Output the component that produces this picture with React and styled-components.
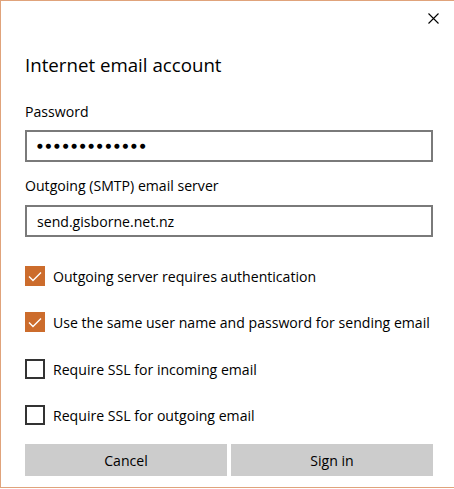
import styled, { createGlobalStyle } from "styled-components"

const Global = createGlobalStyle`
  html, body { margin: 0; padding: 0; background: #fff; }
  body { font-family: "Open Sans", "Noto Sans", sans-serif; color: #000; }
`

const Window = styled.div`
  width: 454px;
  height: 488px;
  box-sizing: border-box;
  border-top: 1px solid #e0a37b;
  border-left: 1px solid #e0a37b;
  border-bottom: 1px solid #e0a37b;
  display: flex;
  flex-direction: column;
  padding: 0 21px 0 24px;
  position: relative;
`

const CloseButton = styled.button`
  position: absolute;
  top: 8px;
  right: 11px;
  width: 20px;
  height: 18px;
  border: 0;
  background: none;
  padding: 0;
  display: flex;
  align-items: center;
  justify-content: center;
`

const Title = styled.h1`
  margin: 50px 0 0;
  font-size: 18.7px;
  font-weight: 400;
  line-height: 28px;
`

const Label = styled.div`
  margin-top: ${p => p.$top}px;
  font-size: 14.1px;
  line-height: 20px;
  white-space: nowrap;
`

const Input = styled.div`
  margin-top: ${p => p.$top}px;
  height: 32px;
  box-sizing: border-box;
  border: 2px solid #7a7a7a;
  padding: 0 10px;
  display: flex;
  align-items: center;
  font-size: 14.1px;
`

const Dots = styled.span`
  font-size: 6.6px;
  letter-spacing: 2.8px;
  font-family: "DejaVu Sans", sans-serif;
`

const CheckRow = styled.label`
  margin-top: ${p => p.$top}px;
  display: flex;
  align-items: center;
  gap: 8px;
  height: 20px;
  font-size: 14.1px;
  white-space: nowrap;
`

const Box = styled.span`
  width: 20px;
  height: 20px;
  box-sizing: border-box;
  flex-shrink: 0;
  display: flex;
  align-items: center;
  justify-content: center;
  background: ${p => (p.$checked ? "#cc6c2c" : "#fff")};
  border: ${p => (p.$checked ? "none" : "2px solid #333")};
`

const Buttons = styled.div`
  margin-top: 19px;
  display: grid;
  grid-template-columns: 1fr 1fr;
  gap: 4px;
`

const Button = styled.button`
  height: 32px;
  border: 0;
  background: #cccccc;
  font-family: inherit;
  font-size: 14.1px;
  color: #000;
`

function Check({ checked, children, top }) {
  return (
    <CheckRow $top={top}>
      <Box $checked={checked}>
        {checked && (
          <svg width="14" height="11" viewBox="0 0 14 11">
            <path d="M1 5.5 L5 9.5 L13 1.5" fill="none" stroke="#fff" strokeWidth="1.4" />
          </svg>
        )}
      </Box>
      {children}
    </CheckRow>
  )
}

export default function App() {
  return (
    <>
      <Global />
      <Window>
        <CloseButton aria-label="Close">
          <svg width="11" height="11" viewBox="0 0 11 11">
            <path d="M0.5 0.5 L10.5 10.5 M10.5 0.5 L0.5 10.5" stroke="#000" strokeWidth="1.1" />
          </svg>
        </CloseButton>
        <Title>Internet email account</Title>
        <Label $top={23}>Password</Label>
        <Input $top={8}><Dots>●●●●●●●●●●●●●</Dots></Input>
        <Label $top={14}>Outgoing (SMTP) email server</Label>
        <Input $top={9}>send.gisborne.net.nz</Input>
        <Check checked top={29}>Outgoing server requires authentication</Check>
        <Check checked top={26}>Use the same user name and password for sending email</Check>
        <Check top={27}>Require SSL for incoming email</Check>
        <Check top={26}>Require SSL for outgoing email</Check>
        <Buttons>
          <Button>Cancel</Button>
          <Button>Sign in</Button>
        </Buttons>
      </Window>
    </>
  )
}
